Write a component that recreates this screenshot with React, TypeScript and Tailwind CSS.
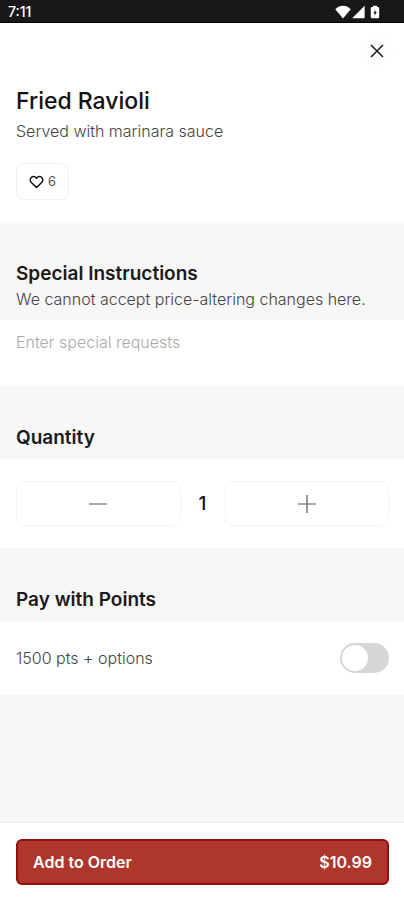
import { useState } from "react";
import type { ReactNode } from "react";

type SectionHeaderProps = {
  title: string;
  htmlFor?: string;
  children?: ReactNode;
};

const StatusBar = () => (
  <div className="flex h-[23px] items-center justify-between border-b border-black bg-[#181818] pt-[2px] pl-2 pr-6 text-white">
    <span className="text-sm leading-4 font-medium">7:11</span>
    <div className="flex items-center gap-px">
      <svg width="16" height="14" viewBox="0 0 16 14" fill="currentColor" aria-hidden="true">
        <path d="M8 13.500.3 4.200C2.400 1.900 5.100.800 8 .800s5.600 1.100 7.700 3.400z" />
      </svg>
      <svg width="13" height="14" viewBox="0 0 13 14" fill="currentColor" aria-hidden="true">
        <path d="M12.600.800v12.400H.2z" />
      </svg>
      <svg className="ml-1" width="10" height="14" viewBox="0 0 10 14" aria-hidden="true">
        <path
          fill="currentColor"
          d="M3 .7h4v1.200h1a1.200 1.200 0 0 1 1.200 1.200v9A1.200 1.200 0 0 1 8 13.300H2A1.200 1.200 0 0 1 .8 12.100v-9A1.200 1.200 0 0 1 2 1.900h1z"
        />
        <path fill="#181818" d="M5.400 4.600 3.400 8.300h1.300v2.400l2-3.700H5.400z" />
      </svg>
    </div>
  </div>
);

const SectionHeader = ({ title, htmlFor, children }: SectionHeaderProps) => (
  <div className="bg-[#f7f7f7] pt-10 pr-[15px] pb-[9px] pl-4">
    <h2 className="text-[19px] leading-6 font-semibold text-[#1a1a1a]">
      {htmlFor ? <label htmlFor={htmlFor}>{title}</label> : title}
    </h2>
    {children}
  </div>
);

const App = () => {
  const [quantity, setQuantity] = useState(1);
  const [payWithPoints, setPayWithPoints] = useState(false);
  const total = (10.99 * quantity).toFixed(2);

  return (
    <div className="flex min-h-screen flex-col bg-[#f7f7f7] font-['Inter','Liberation_Sans',sans-serif] text-[#111]">
      <StatusBar />

      <header className="bg-white pt-3 pr-[15px] pb-[22px] pl-4">
        <div className="flex justify-end">
          <button
            type="button"
            aria-label="Close"
            className="-mr-1 flex size-8 items-center justify-center rounded-full bg-[#fdfdfd]"
          >
            <svg width="14" height="14" viewBox="0 0 14 14" fill="none" stroke="#222" strokeWidth="1.600" aria-hidden="true">
              <path d="m1 1 12 12M13 1 1 13" />
            </svg>
          </button>
        </div>
        <h1 className="mt-5 text-[23px] leading-7 font-medium">Fried Ravioli</h1>
        <p className="mt-1 text-base leading-6 font-light text-[#444]">Served with marinara sauce</p>
        <button
          type="button"
          aria-label="Like, 6 likes"
          className="mt-5 flex h-[37px] items-center gap-1 rounded-lg border border-[#f0f0f0] px-3 text-[13px] text-[#555]"
        >
          <svg width="15" height="14" viewBox="0 0 16 14" fill="none" stroke="#111" strokeWidth="1.600" strokeLinejoin="round" aria-hidden="true">
            <path d="M8 12.800 2.500 7.500C.9 5.900 1 3.500 2.400 2.200c1.500-1.400 3.900-1.200 5.200.3L8 3l.4-.5c1.300-1.500 3.700-1.700 5.200-.3C15 3.500 15.100 5.900 13.500 7.500z" />
          </svg>
          6
        </button>
      </header>

      <section>
        <SectionHeader title="Special Instructions" htmlFor="requests">
          <p className="mt-px text-base leading-6 font-light text-[#444]">
            We cannot accept price-altering changes here.
          </p>
        </SectionHeader>
        <textarea
          id="requests"
          placeholder="Enter special requests"
          className="block h-[66px] w-full resize-none bg-white px-4 py-[10px] text-base leading-6 font-light outline-none placeholder:text-[#aaa]"
        />
      </section>

      <section>
        <SectionHeader title="Quantity" />
        <div className="flex items-center bg-white py-[22px] pr-[15px] pl-4">
          <button
            type="button"
            aria-label="Decrease quantity"
            onClick={() => setQuantity(Math.max(1, quantity - 1))}
            className="flex h-[45px] flex-1 items-center justify-center rounded-lg border border-[#f3f3f3]"
          >
            <svg width="18" height="18" viewBox="0 0 18 18" stroke="#aaa" strokeWidth="2" aria-hidden="true">
              <path d="M0 9h18" />
            </svg>
          </button>
          <span className="w-11 text-center text-[19px] leading-6 font-medium">{quantity}</span>
          <button
            type="button"
            aria-label="Increase quantity"
            onClick={() => setQuantity(quantity + 1)}
            className="flex h-[45px] flex-1 items-center justify-center rounded-lg border border-[#f3f3f3]"
          >
            <svg width="18" height="18" viewBox="0 0 18 18" strokeWidth="2" aria-hidden="true">
              <path d="M0 9h18" stroke="#aaa" />
              <path d="M9 0v18" stroke="#777" strokeWidth="1.500" />
            </svg>
          </button>
        </div>
      </section>

      <section>
        <SectionHeader title="Pay with Points" />
        <label className="flex items-center justify-between bg-white py-[22px] pr-[15px] pl-4">
          <span className="text-base leading-6 font-light text-[#444]">1500 pts + options</span>
          <span className="relative flex">
            <input
              type="checkbox"
              role="switch"
              checked={payWithPoints}
              onChange={(e) => setPayWithPoints(e.target.checked)}
              className="peer h-[30px] w-[49px] appearance-none rounded-full bg-[#d6d6d6] checked:bg-[#ae362c]"
            />
            {/* Knob sits over the track and slides when the switch is on */}
            <span className="pointer-events-none absolute top-[2px] left-[2px] size-[26px] rounded-full bg-white transition-transform peer-checked:translate-x-[19px]" />
          </span>
        </label>
      </section>

      <footer className="mt-auto border-t border-[#ececec] bg-white pt-4 pr-[15px] pb-[15px] pl-4">
        <button
          type="button"
          className="flex h-[46px] w-full items-center justify-between rounded-md border-2 border-[#920f10] bg-[#ae362c] px-[15px] text-base font-semibold text-white"
        >
          <span>Add to Order</span>
          <span>${total}</span>
        </button>
      </footer>
    </div>
  );
};

export default App;
